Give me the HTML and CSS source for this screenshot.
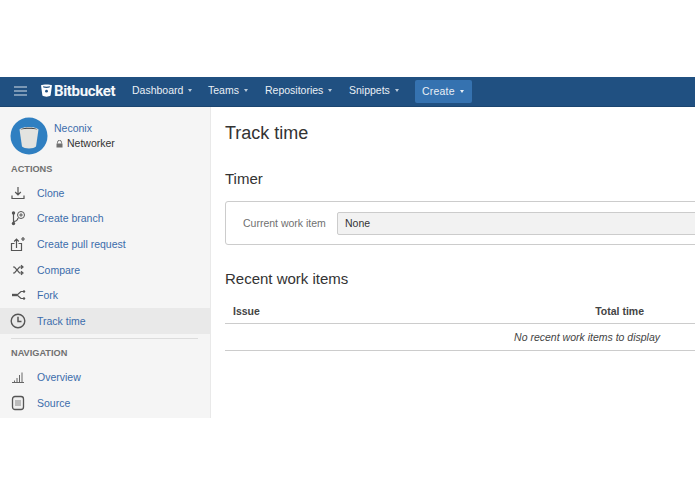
FILE: index.html
```html
<!DOCTYPE html>
<html lang="en">
<head>
<meta charset="utf-8">
<title>Track time</title>
<link rel="stylesheet" href="styles.css">
</head>
<body>
<div class="page">
  <header class="topbar">
    <svg class="burger" viewBox="0 0 13 10"><path d="M0 1h13M0 5h13M0 9h13" stroke="#d5e0ea" stroke-width="1.2" fill="none"/></svg>
    <div class="logo">
      <svg class="logo-mark" viewBox="0 0 11 13"><path fill-rule="evenodd" d="M0 1.2C2 .2 9 .2 11 1.2L9.6 11.6C8 13 3 13 1.4 11.6ZM2 2.2 2.4 3.6C4 4 7 4 8.6 3.6L9 2.2C7 2.8 4 2.8 2 2.2Z" fill="#fff"/><circle cx="5.5" cy="7.2" r="1.4" fill="#205081"/></svg>
      <span class="logo-text">Bitbucket</span>
    </div>
    <nav class="mainnav">
      <a class="navitem nav-dash">Dashboard<i class="caret"></i></a>
      <a class="navitem nav-teams">Teams<i class="caret"></i></a>
      <a class="navitem nav-repos">Repositories<i class="caret"></i></a>
      <a class="navitem nav-snip">Snippets<i class="caret"></i></a>
    </nav>
    <a class="create">Create<i class="caret"></i></a>
  </header>
  <div class="body">
    <aside class="sidebar">
      <div class="repo">
        <svg class="avatar" viewBox="0 0 38 38"><circle cx="19" cy="19" r="18.5" fill="#2f7fc1"/><path d="M9.5 12.5C12 9 26 9 28.5 12.5L26 29.5C24 32 14 32 12 29.5Z" fill="#e3e3e0"/><path d="M10.5 12.5C13 10 25 10 27.500 12.500C24 11.500 14 11.500 10.500 12.500Z" fill="#333"/></svg>
        <div class="repo-text">
          <a class="repo-owner">Neconix</a>
          <div class="repo-name"><svg class="lock" viewBox="0 0 7 8"><path d="M1.500 3.500V2.300a2 2 0 0 1 4 0V3.500" fill="none" stroke="#707070"/><rect x=".5" y="3.500" width="6" height="4" fill="#707070"/></svg>Networker</div>
        </div>
      </div>
      <h5 class="side-head head-actions">ACTIONS</h5>
      <ul class="side-list">
        <li class="side-item"><svg class="ic" viewBox="0 0 16 16"><path d="M8 2V9.500M5.200 7l2.800 2.800L10.800 7M2 10.500v3h12v-3" fill="none" stroke="#555" stroke-width="1.200"/></svg><a>Clone</a></li>
        <li class="side-item"><svg class="ic" viewBox="0 0 16 16"><circle cx="3.500" cy="3" r="1.700" fill="#555"/><circle cx="3.500" cy="13.500" r="1.700" fill="#555"/><path d="M3.500 3v10.500M3.500 11.500c3 0 4-1 4.500-3.500" fill="none" stroke="#555" stroke-width="1.200"/><circle cx="11" cy="5" r="3.500" fill="none" stroke="#555"/><path d="M11 3.200v3.600M9.200 5h3.600" stroke="#555"/></svg><a>Create branch</a></li>
        <li class="side-item"><svg class="ic" viewBox="0 0 16 16"><path d="M4.500 7.500H1.500v7h10v-7H8.500M6.500 12V3.500M4.200 5.500 6.500 3.200 8.800 5.500M13 1v4M11 3h4" fill="none" stroke="#555" stroke-width="1.200"/></svg><a>Create pull request</a></li>
        <li class="side-item"><svg class="ic" viewBox="0 0 16 16"><path d="M3 5h1.500l5 6h2.500M3 11h1.500l5-6h2.500M11 3.300l2 1.700-2 1.700M11 9.300l2 1.700-2 1.700" fill="none" stroke="#555" stroke-width="1.200"/></svg><a>Compare</a></li>
        <li class="side-item"><svg class="ic" viewBox="0 0 16 16"><path d="M2 8h5" stroke="#555" stroke-width="2.400"/><path d="M7 8l4-3.500h2M7 8l4 3.500h2" fill="none" stroke="#555" stroke-width="1.200"/><circle cx="14" cy="4.500" r="1.200" fill="#555"/><circle cx="14" cy="11.500" r="1.200" fill="#555"/></svg><a>Fork</a></li>
        <li class="side-item active"><svg class="ic" viewBox="0 0 16 16"><circle cx="8" cy="8" r="6.800" fill="none" stroke="#555" stroke-width="1.400"/><path d="M8 3.800V8.500H11.500" fill="none" stroke="#555" stroke-width="1.500"/></svg><a>Track time</a></li>
      </ul>
      <hr class="side-rule">
      <h5 class="side-head head-nav">NAVIGATION</h5>
      <ul class="side-list">
        <li class="side-item"><svg class="ic" viewBox="0 0 16 16"><path d="M2 13.500h12M4.500 13v-1.500M7 13V9M9.500 13V6M12 13V3.500" fill="none" stroke="#666"/></svg><a>Overview</a></li>
        <li class="side-item"><svg class="ic" viewBox="0 0 16 16"><rect x="2.500" y="1.500" width="11" height="13" rx="2.500" fill="#f0f0f0" stroke="#555" stroke-width="1.300"/><path d="M5 6h6M5 8h6M5 10h6" stroke="#888"/></svg><a>Source</a></li>
      </ul>
    </aside>
    <main class="content">
      <h1 class="title">Track time</h1>
      <h2 class="sub sub-timer">Timer</h2>
      <div class="timer-box">
        <span class="field-label">Current work item</span>
        <div class="select">None</div>
      </div>
      <h2 class="sub sub-recent">Recent work items</h2>
      <table class="items">
        <thead><tr><th class="col-issue">Issue</th><th class="col-total">Total time</th></tr></thead>
        <tbody><tr><td class="empty" colspan="2">No recent work items to display</td></tr></tbody>
      </table>
    </main>
  </div>
</div>
</body>
</html>
```
FILE: styles.css
```css
html, body { margin: 0; padding: 0; background: #fff; }
body { width: 695px; height: 494px; overflow: hidden; font-family: "Liberation Sans", Arial, sans-serif; font-size: 10.500px; color: #333; }
a { color: #3b6cab; text-decoration: none; }
.page { padding-top: 77px; height: 341px; display: flex; flex-direction: column; }
.topbar { height: 29px; flex: none; background: #205081; border-bottom: 1px solid #1b4570; display: flex; align-items: center; }
.burger { width: 13px; height: 10px; margin-left: 14px; flex: none; margin-bottom: 2px; }
.logo { display: flex; align-items: center; margin-left: 14px; width: 91px; flex: none; margin-bottom: 2px; }
.logo-mark { width: 11px; height: 13px; flex: none; }
.logo-text { color: #f4f7fa; font: bold 15px Roboto, sans-serif; letter-spacing: -0.350px; margin-left: 2px; }
.mainnav { display: flex; }
.navitem { color: #e9eff5; display: flex; align-items: center; white-space: nowrap; margin-bottom: 4px; }
.nav-dash { width: 76px; }
.nav-teams { width: 57px; }
.nav-repos { width: 84px; }
.nav-snip { width: 66px; }
.caret { display: inline-block; margin-left: 5px; margin-top: 1px; border: 2.500px solid transparent; border-top: 3px solid #b9cadb; border-bottom: 0; }
.create { width: 57px; height: 23px; box-sizing: border-box; padding: 0 0 1px 7px; background: #3572b0; border-radius: 2px; color: #e9eff5; display: flex; align-items: center; letter-spacing: .200px; margin-bottom: 1px; }
.create .caret { border-top-color: #e9eff5; }
.body { flex: 1; display: flex; min-height: 0; }
.sidebar { width: 211px; box-sizing: border-box; flex: none; background: #f5f5f5; border-right: 1px solid #e9e9e9; overflow: hidden; }
.repo { display: flex; align-items: center; height: 38px; padding: 10px 0 0 10px; }
.avatar { width: 38px; height: 38px; flex: none; }
.repo-text { margin-left: 6px; line-height: 15px; }
.repo-name { display: flex; align-items: center; padding-left: 2px; color: #333; }
.lock { width: 7px; height: 8px; margin-right: 4px; }
.side-head { margin: 0; font-size: 9.200px; font-weight: bold; color: #707070; padding-left: 11px; line-height: 11px; }
.head-actions { padding-top: 9px; padding-bottom: 5px; }
.head-nav { padding-top: 9px; padding-bottom: 6px; }
.side-list { list-style: none; margin: 0; padding: 0; }
.side-item { height: 25.600px; display: flex; align-items: center; padding-left: 10px; }
.side-item a { margin-left: 11px; }
.active { background: #e9e9e9; }
.ic { width: 16px; height: 16px; flex: none; }
.side-rule { margin: 4px 12px 0 11px; border: 0; border-top: 1px solid #dcdcdc; }
.content { flex: 1; padding: 15px 0 0 14px; min-width: 0; }
.title { margin: 0; font-weight: normal; font-size: 18px; line-height: 22px; color: #333; }
.sub { margin: 0; font-weight: normal; font-size: 15px; line-height: 18px; color: #333; }
.sub-timer { margin-top: 26px; }
.timer-box { margin-top: 13px; width: 500px; height: 44px; box-sizing: border-box; border: 1px solid #ccc; border-radius: 3px; display: flex; align-items: center; padding-left: 17px; }
.field-label { width: 94px; flex: none; color: #707070; }
.select { width: 400px; flex: none; height: 23px; box-sizing: border-box; margin-right: -30px; background: #f2f2f2; border: 1px solid #ccc; border-radius: 2px; padding-left: 7px; line-height: 21px; color: #333; }
.sub-recent { margin-top: 25px; }
.items { margin-top: 10px; width: 470px; border-collapse: collapse; table-layout: fixed; }
.items th { height: 25px; padding: 0; font-size: 10.500px; font-weight: bold; color: #444; border-bottom: 1px solid #ccc; }
.col-issue { text-align: left; padding-left: 8px !important; }
.col-total { text-align: right; padding-right: 51px !important; width: 200px; }
.empty { height: 26px; padding: 0 0 0 0; text-align: right; padding-right: 35px; font-style: italic; color: #444; border-bottom: 1px solid #ccc; }
```
